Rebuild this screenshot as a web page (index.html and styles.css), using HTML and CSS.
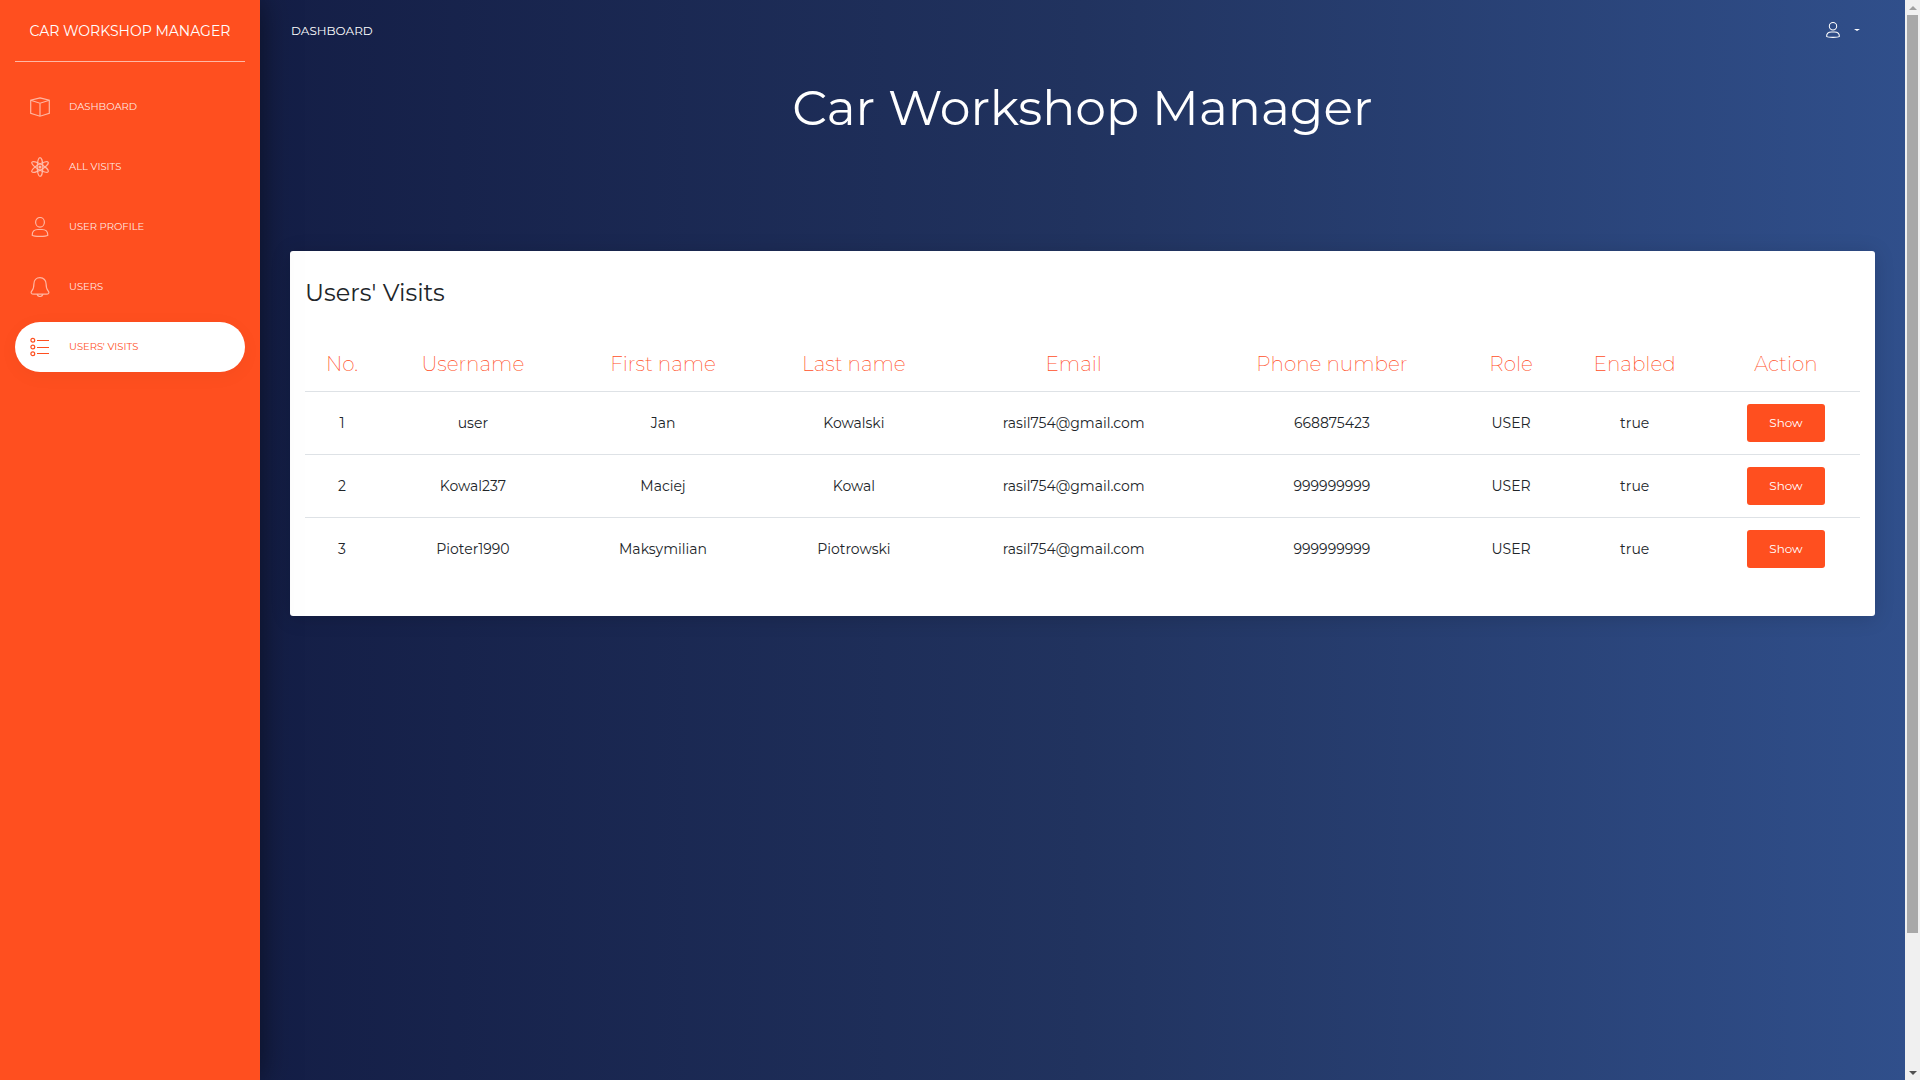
FILE: index.html
```html
<!DOCTYPE html>
<html lang="en">
<head>
<meta charset="utf-8">
<meta name="viewport" content="width=device-width, initial-scale=1">
<title>Car Workshop Manager</title>
<link rel="stylesheet" href="styles.css">
</head>
<body>
<div class="layout">
  <aside class="sidebar">
    <a class="brand" href="#">CAR WORKSHOP MANAGER</a>
    <nav class="menu">
      <a class="menu-item" href="#">
        <svg class="icon" viewBox="0 0 20 20"><path d="M10 .8 19.3 3.2V16.2L10 19.2.7 16.2V3.2ZM.7 3.2 10 6.2 19.3 3.2M10 6.2V19.2"/></svg>
        <span>DASHBOARD</span>
      </a>
      <a class="menu-item" href="#">
        <svg class="icon" viewBox="0 0 20 20"><ellipse cx="10" cy="10" rx="2.8" ry="9.4"/><ellipse cx="10" cy="10" rx="2.8" ry="9.4" transform="rotate(60 10 10)"/><ellipse cx="10" cy="10" rx="2.8" ry="9.4" transform="rotate(-60 10 10)"/><circle class="dot" cx="10" cy="10" r="1"/></svg>
        <span>ALL VISITS</span>
      </a>
      <a class="menu-item" href="#">
        <svg class="icon" viewBox="0 0 20 20"><ellipse cx="10" cy="5.3" rx="4.4" ry="4.8"/><path d="M2.2 18.2C2.2 14.6 4.6 12.5 8 12.5H12C15.4 12.5 17.8 14.6 17.8 18.2 15.8 19.7 4.2 19.7 2.2 18.2Z"/></svg>
        <span>USER PROFILE</span>
      </a>
      <a class="menu-item" href="#">
        <svg class="icon" viewBox="0 0 20 20"><path d="M10 .7C6.3.7 3.9 3.3 3.9 7 3.9 11.5 3.2 12.6 1.8 14 .4 15.6 1.4 17.2 3.6 17.2H16.4C18.6 17.2 19.6 15.6 18.2 14 16.8 12.6 16.1 11.5 16.1 7 16.1 3.3 13.7.7 10 .7ZM7 17.3Q7.8 19.5 10 19.5T13 17.3"/></svg>
        <span>USERS</span>
      </a>
      <a class="menu-item active" href="#" aria-current="page">
        <svg class="icon" viewBox="0 0 20 20"><circle cx="2.8" cy="3.2" r="1.9"/><circle cx="2.8" cy="10" r="1.9"/><circle cx="2.8" cy="16.8" r="1.9"/><path d="M7 3.5H19M7 10.5H19M7 16.5H19"/></svg>
        <span>USERS' VISITS</span>
      </a>
    </nav>
  </aside>
  <div class="main">
    <header class="topbar">
      <a class="crumb" href="#">DASHBOARD</a>
      <button class="account" type="button" aria-label="Account">
        <svg class="icon small" viewBox="0 0 20 20"><ellipse cx="10" cy="5.3" rx="4.6" ry="4.6"/><path d="M2 18C2 14.6 4.6 12.5 8 12.5H12C15.4 12.5 18 14.6 18 18 15.8 19.6 4.2 19.6 2 18Z"/></svg>
        <span class="caret"></span>
      </button>
    </header>
    <h1 class="title">Car Workshop Manager</h1>
    <section class="card">
      <h2 class="card-title">Users' Visits</h2>
      <table class="visits">
        <thead>
          <tr><th>No.</th><th>Username</th><th>First name</th><th>Last name</th><th>Email</th><th>Phone number</th><th>Role</th><th>Enabled</th><th>Action</th></tr>
        </thead>
        <tbody>
          <tr><td>1</td><td>user</td><td>Jan</td><td>Kowalski</td><td>rasil754@gmail.com</td><td>668875423</td><td>USER</td><td>true</td><td><button class="btn" type="button">Show</button></td></tr>
          <tr><td>2</td><td>Kowal237</td><td>Maciej</td><td>Kowal</td><td>rasil754@gmail.com</td><td>999999999</td><td>USER</td><td>true</td><td><button class="btn" type="button">Show</button></td></tr>
          <tr><td>3</td><td>Pioter1990</td><td>Maksymilian</td><td>Piotrowski</td><td>rasil754@gmail.com</td><td>999999999</td><td>USER</td><td>true</td><td><button class="btn" type="button">Show</button></td></tr>
        </tbody>
      </table>
    </section>
  </div>
  <div class="scrollbar" aria-hidden="true">
    <span class="arrow up"></span>
    <span class="track"><span class="thumb"></span></span>
    <span class="arrow down"></span>
  </div>
</div>
</body>
</html>
```
FILE: styles.css
```css
* { box-sizing: border-box; }
body {
  margin: 0;
  font-family: Montserrat, Inter, "Open Sans", sans-serif;
  font-size: 14px;
  font-weight: 400;
  color: #212529;
}
a { color: inherit; text-decoration: none; }
button { font: inherit; color: inherit; border: 0; cursor: pointer; }

.layout { display: flex; min-height: 100vh; }

.sidebar {
  flex: 0 0 260px;
  padding: 0 15px;
  background: #ff4f1f;
  color: #fff;
  box-shadow: 0 0 30px rgba(0, 0, 0, .5);
  z-index: 1;
}
.brand {
  display: flex;
  align-items: center;
  justify-content: center;
  height: 62px;
  border-bottom: 1px solid rgba(255, 255, 255, .6);
  font-size: 14px;
  white-space: nowrap;
}
.menu { display: flex; flex-direction: column; gap: 10px; padding-top: 20px; }
.menu-item {
  display: flex;
  align-items: center;
  gap: 19px;
  height: 50px;
  padding: 0 15px 1px;
  border-radius: 30px;
  font-size: 10px;
  color: rgba(255, 255, 255, .9);
}
.menu-item.active {
  background: #fff;
  color: #ff4f1f;
  box-shadow: 0 4px 20px rgba(0, 0, 0, .04);
}
.icon {
  width: 20px;
  height: 20px;
  fill: none;
  stroke: currentColor;
  stroke-width: 1.2;
  opacity: .65;
}
.menu-item.active .icon { opacity: 1; }
.icon .dot { fill: currentColor; }

.main {
  flex: 1;
  min-width: 0;
  padding: 0 30px;
  background: linear-gradient(to right, #141e46, #21335f 50%, #304f8b);
}
.topbar {
  display: flex;
  align-items: center;
  justify-content: space-between;
  height: 60px;
  padding: 0 15px 0 1px;
  color: #fff;
  font-size: 12px;
}
.account {
  display: flex;
  align-items: center;
  gap: 13px;
  padding: 0;
  background: none;
}
.icon.small { width: 16px; height: 16px; opacity: 1; stroke-width: 1.3; }
.caret { border: 3px solid transparent; border-top: 2px solid #fff; border-bottom: 0; }
.title {
  margin: 18px 0 113px;
  color: #fff;
  font-size: 49px;
  line-height: 60px;
  font-weight: 400;
  text-align: center;
}
.card {
  padding: 27px 15px 36px;
  background: #fff;
  border-radius: 3px;
  box-shadow: 0 2px 20px rgba(0, 0, 0, .15);
}
.card-title {
  margin: 0 0 36px;
  font-size: 24px;
  line-height: 30px;
  font-weight: 400;
}
.visits {
  width: 100%;
  border-collapse: collapse;
  text-align: center;
}
.visits th {
  height: 47px;
  padding: 0 7px 7px;
  color: #ff4f1f;
  font-size: 20px;
  font-weight: 200;
  white-space: nowrap;
}
.visits td { height: 63px; padding: 0 7px; border-top: 1px solid #dee2e6; }
.btn {
  height: 38px;
  width: 78px;
  padding: 0;
  border-radius: 3px;
  background: #ff4f1f;
  color: #fff;
  font-size: 12px;
}

.scrollbar {
  flex: 0 0 15px;
  display: flex;
  flex-direction: column;
  align-items: center;
  background: #f0f0f0;
}
.arrow { height: 15px; display: flex; align-items: center; }
.arrow::before { content: ""; border: 4px solid transparent; }
.up::before { border-bottom-color: #a0a0a0; border-top: 0; }
.down::before { border-top-color: #505050; border-bottom: 0; }
.track { flex: 1; }
.thumb { display: block; width: 11px; height: 85vh; background: #a8a8a8; }
```
